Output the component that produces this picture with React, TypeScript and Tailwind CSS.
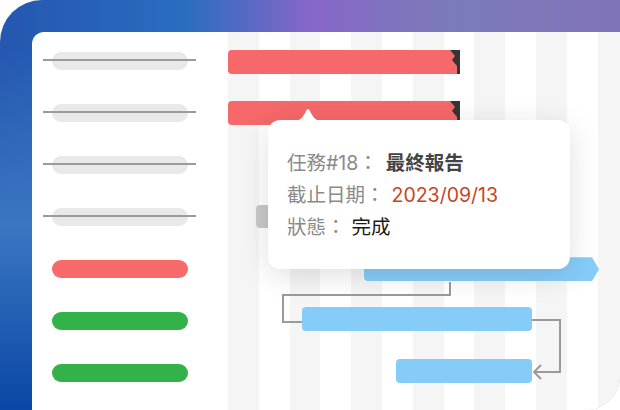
import React from "react";

const RED = "#f6686a";

function Pill({ color, strike }: { color: string; strike?: boolean }) {
  return (
    <div className="h-[52px] flex items-center pl-[20px]">
      <div className={`relative w-[136px] h-[18px] rounded-full ${color}`}>
        {strike && (
          <div className="absolute left-[-9px] right-[-8px] top-[7px] h-[2px] bg-[#9b9b9b]" />
        )}
      </div>
    </div>
  );
}

function RedBar() {
  return (
    <div className="flex w-[232px] h-[24px]">
      <div className="flex-1 h-full rounded-l-[4px] bg-[#f6686a]" />
      <svg width="11" height="24" viewBox="0 0 11 24" className="block">
        <rect x="1" y="0" width="10" height="24" fill="#353535" />
        <polygon points="0,0 1,0 6,6 3,10 8,16 8,24 0,24" fill={RED} />
      </svg>
    </div>
  );
}

export default function App() {
  return (
    <div className="w-[620px] h-[410px] bg-white overflow-hidden">
      <div className="w-full h-full flex pl-[32px] pt-[32px] rounded-tl-[42px] rounded-br-[34px] overflow-hidden bg-no-repeat bg-[image:linear-gradient(180deg,rgba(37,88,176,0)_12%,#3a76c1_55%,#0a47a6_100%),linear-gradient(90deg,#2557b0_0%,#2a6dbf_30%,#8766c9_50%,#7b7bb8_72%,#8074b8_100%)] bg-[length:32px_100%,100%_100%]">
        <div className="flex-1 flex rounded-tl-[12px] bg-white overflow-hidden">
          {/* left list */}
          <div className="w-[196px] pt-[3px] flex flex-col">
            <Pill color="bg-[#e9e9e9]" strike />
            <Pill color="bg-[#e9e9e9]" strike />
            <Pill color="bg-[#e9e9e9]" strike />
            <Pill color="bg-[#e9e9e9]" strike />
            <Pill color="bg-[#f86a69]" />
            <Pill color="bg-[#33b249]" />
            <Pill color="bg-[#33b249]" />
          </div>

          {/* gantt */}
          <div className="flex-1 relative pt-[4px] flex flex-col bg-[image:repeating-linear-gradient(90deg,#f5f5f5_0px,#f5f5f5_30.8px,#ffffff_30.8px,#ffffff_61.6px)]">
            <div className="h-[51.5px] flex items-center">
              <RedBar />
            </div>
            <div className="h-[51.5px] flex items-center">
              <RedBar />
            </div>
            <div className="h-[51.5px]" />
            <div className="h-[51.5px] flex items-center pl-[28px]">
              <div className="w-[80px] h-[23px] rounded-[4px] bg-[#c8c8c8]" />
            </div>
            <div className="h-[51.5px] flex items-center pl-[136px]">
              <div className="w-[235px] h-[24px] mt-[3px] rounded-l-[4px] bg-[#86ccf9] [clip-path:polygon(0_0,calc(100%-7px)_0,100%_50%,calc(100%-7px)_100%,0_100%)]" />
            </div>
            <div className="h-[51.5px] flex items-center pl-[74px]">
              <div className="w-[230px] h-[24px] rounded-[4px] bg-[#86ccf9]" />
            </div>
            <div className="h-[51.5px] flex items-center pl-[168px]">
              <div className="w-[136px] h-[24px] rounded-[4px] bg-[#86ccf9]" />
            </div>

            {/* connectors */}
            <svg
              className="absolute left-0 top-0 pointer-events-none"
              width="392"
              height="378"
              viewBox="0 0 392 378"
              fill="none"
            >
              <path d="M222 250 V263 H55 V290 H74" stroke="#9a9a9a" strokeWidth="2" />
              <path d="M304 288 H332 V340 H306" stroke="#9a9a9a" strokeWidth="2" />
              <path d="M313 333 L306 340 L313 347" stroke="#9a9a9a" strokeWidth="2" />
            </svg>

            {/* tooltip */}
            <div className="absolute left-[40px] top-[88px] w-[302px] h-[149px] rounded-[12px] bg-white shadow-[0_6px_30px_rgba(0,0,0,0.13)] pl-[19px] pt-[27px] font-['Inter','Noto_Sans_CJK_TC',sans-serif] text-[19.5px] leading-[32px]">
              <svg
                className="absolute left-[25px] top-[-13px]"
                width="30"
                height="14"
                viewBox="0 0 30 14"
              >
                <path d="M0 14 C8 14 10 10 13 4 Q15 0 17 4 C20 10 22 14 30 14 Z" fill="#ffffff" />
              </svg>
              <div className="flex whitespace-nowrap">
                <span className="text-[#8a8a8a]">任務#18：</span>
                <span className="ml-[8px] font-bold text-[#444444]">最終報告</span>
              </div>
              <div className="flex whitespace-nowrap">
                <span className="text-[#8a8a8a]">截止日期：</span>
                <span className="ml-[7px] text-[#c4461f]">2023/09/13</span>
              </div>
              <div className="flex whitespace-nowrap">
                <span className="text-[#8a8a8a]">狀態：</span>
                <span className="ml-[6px] text-[#1a1a1a]">完成</span>
              </div>
            </div>
          </div>
        </div>
      </div>
    </div>
  );
}
